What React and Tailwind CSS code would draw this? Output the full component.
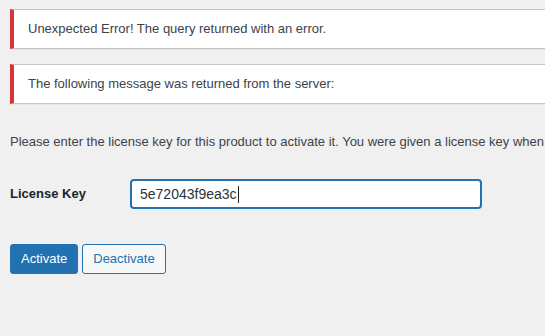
import React from 'react';

const Notice = ({ children, className = '' }) => (
  <div className={`border border-[#c3c4c7] border-l-4 border-l-[#d63638] bg-white px-3 shadow-[0_1px_1px_rgba(0,0,0,0.04)] ${className}`}>
    <p className="py-[9px] px-[2px] text-[13px] leading-[20px] text-[#3c434a]">{children}</p>
  </div>
);

const App = () => {
  return (
    <div
      className="w-[545px] h-[336px] overflow-hidden bg-[#f0f0f1]"
      style={{ fontFamily: '"Liberation Sans", Arial, sans-serif' }}
    >
      <div className="w-[900px] pl-[10px] pt-[9px]">
        <Notice>Unexpected Error! The query returned with an error.</Notice>
        <Notice className="mt-[15px]">The following message was returned from the server:</Notice>

        <p className="mt-[28px] text-[13px] leading-[20px] text-[#3c434a] whitespace-nowrap">
          Please enter the license key for this product to activate it. You were given a license key when you purchased this item.
        </p>

        {/* License key row */}
        <div className="mt-[27px] flex items-center">
          <label className="w-[120px] text-[13px] font-bold text-[#1d2327]">License Key</label>
          <div className="flex h-[30px] w-[352px] items-center rounded-[4px] border-2 border-[#2271b1] bg-white px-[8px] text-[14px] text-[#2c3338]">
            <span>5e72043f9ea3c</span>
            <span className="ml-px h-[17px] w-px bg-[#1d2327]" />
          </div>
        </div>

        {/* Buttons */}
        <div className="mt-[35px] flex gap-[4px]">
          <button className="h-[30px] rounded-[3px] border border-[#2271b1] bg-[#2271b1] px-[10px] text-[13px] text-white">
            Activate
          </button>
          <button className="h-[30px] rounded-[3px] border border-[#2271b1] bg-[#f6f7f7] px-[10px] text-[13px] text-[#2271b1]">
            Deactivate
          </button>
        </div>
      </div>
    </div>
  );
};

export default App;
